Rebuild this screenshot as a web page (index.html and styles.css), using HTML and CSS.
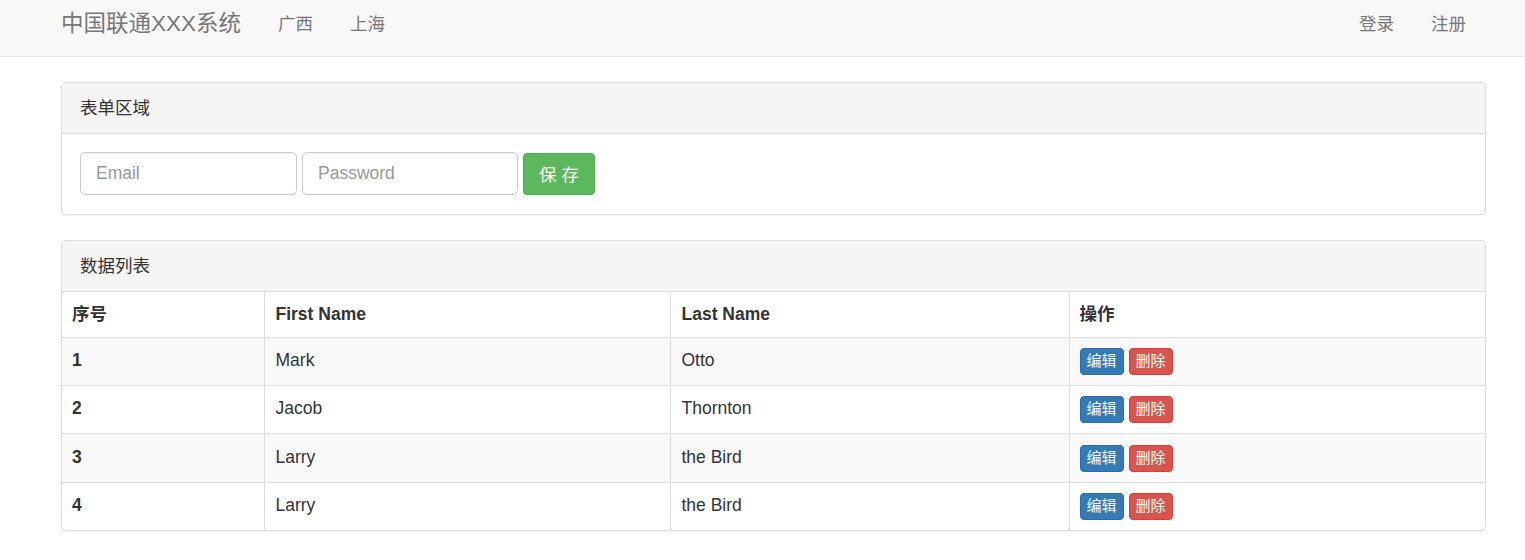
FILE: index.html
```html
<!DOCTYPE html>
<html lang="zh-CN">
<head>
<meta charset="utf-8">
<title>中国联通XXX系统</title>
<link rel="stylesheet" href="styles.css">
</head>
<body>
<nav class="navbar">
  <div class="nav-inner">
    <div class="nav-left">
      <a class="brand" href="#">中国联通XXX系统</a>
      <a class="nav-link" href="#">广西</a>
      <a class="nav-link" href="#">上海</a>
    </div>
    <div class="nav-right">
      <a class="nav-link" href="#">登录</a>
      <a class="nav-link" href="#">注册</a>
    </div>
  </div>
</nav>
<main class="container">
  <section class="panel">
    <div class="panel-heading">表单区域</div>
    <div class="panel-body">
      <form class="form-inline">
        <input class="form-control" type="email" placeholder="Email">
        <input class="form-control pw" type="password" placeholder="Password">
        <button class="btn btn-success" type="button">保 存</button>
      </form>
    </div>
  </section>
  <section class="panel">
    <div class="panel-heading">数据列表</div>
    <table class="table">
      <colgroup>
        <col class="c1"><col class="c2"><col class="c3"><col class="c4">
      </colgroup>
      <thead>
        <tr><th>序号</th><th>First Name</th><th>Last Name</th><th>操作</th></tr>
      </thead>
      <tbody>
        <tr class="odd"><th>1</th><td>Mark</td><td>Otto</td><td><button class="xs edit">编辑</button><button class="xs del">删除</button></td></tr>
        <tr><th>2</th><td>Jacob</td><td>Thornton</td><td><button class="xs edit">编辑</button><button class="xs del">删除</button></td></tr>
        <tr class="odd tall"><th>3</th><td>Larry</td><td>the Bird</td><td><button class="xs edit">编辑</button><button class="xs del">删除</button></td></tr>
        <tr><th>4</th><td>Larry</td><td>the Bird</td><td><button class="xs edit">编辑</button><button class="xs del">删除</button></td></tr>
      </tbody>
    </table>
  </section>
</main>
</body>
</html>
```

FILE: styles.css
```css
* { box-sizing: border-box; }
html, body { margin: 0; padding: 0; }
body {
  font-family: "Liberation Sans", "Noto Sans CJK SC", sans-serif;
  font-size: 17.5px;
  line-height: 25px;
  color: #333;
  background: #fff;
}
a { text-decoration: none; }

.navbar {
  height: 57px;
  background: #f8f8f8;
  border-bottom: 1px solid #e7e7e7;
  margin-bottom: 25px;
}
.nav-inner {
  height: 56px;
  margin-left: 61px;
  width: 1425px;
  display: flex;
  justify-content: space-between;
  align-items: center;
  padding-bottom: 8px;
}
.nav-left, .nav-right { display: flex; align-items: center; }
.brand {
  font-size: 22.5px;
  color: #777;
  padding-right: 18.5px;
  line-height: 30px;
}
.nav-link {
  font-size: 17.5px;
  color: #777;
  padding: 0 18.5px;
  line-height: 25px;
}
.nav-right .nav-link:last-child { padding-right: 20px; }

.container {
  margin-left: 61px;
  width: 1425px;
}
.panel {
  border: 1px solid #ddd;
  border-radius: 5px;
  background: #fff;
  box-shadow: 0 1px 1px rgba(0,0,0,.05);
  margin-bottom: 25px;
  overflow: hidden;
}
.panel-heading {
  background: #f5f5f5;
  border-bottom: 1px solid #ddd;
  padding: 12.5px 18px;
  height: 51px;
  line-height: 25px;
  color: #333;
}
.panel-body {
  padding: 18px 18px 19px;
}
.form-inline { display: flex; gap: 5px; align-items: center; }
.form-control {
  width: 217px;
  height: 43px;
  padding: 7.5px 15px;
  font-family: inherit;
  font-size: 17.5px;
  color: #555;
  border: 1px solid #ccc;
  border-radius: 5px;
  box-shadow: inset 0 1px 1px rgba(0,0,0,.075);
  background: #fff;
  outline: none;
}
.form-control.pw { width: 216px; }
.form-control::placeholder { color: #999; }
.btn {
  height: 42px;
  padding: 0 15px;
  font-family: inherit;
  font-size: 17.5px;
  border-radius: 4px;
  border: 1px solid transparent;
  cursor: pointer;
}
.btn-success {
  color: #fff;
  background: #5cb85c;
  border-color: #4cae4c;
  width: 72px;
}

.table {
  width: 100%;
  border-collapse: collapse;
  table-layout: fixed;
}
.c1 { width: 202px; }
.c2 { width: 406px; }
.c3 { width: 399px; }
.c4 { width: 416px; }
.table th, .table td {
  text-align: left;
  vertical-align: top;
  padding: 10px 10px 10px 11px;
  line-height: 25px;
  border: 1px solid #ddd;
}
.table thead th { padding-top: 10px; padding-bottom: 9px; height: 45px; }
.table tr > :first-child { border-left: 0; padding-left: 10px; }
.table tr > :last-child { border-right: 0; padding-left: 10px; }
.table thead tr th { border-top: 0; }
.table tbody tr:last-child > * { border-bottom: 0; }
.table tbody th { font-weight: bold; }
.table tbody td, .table tbody th { height: 48px; padding-top: 10px; padding-bottom: 10px; }
.table tbody tr.tall > * { height: 49px; padding-top: 11px; }
.table tr.odd { background: #f9f9f9; }

.xs {
  font-family: inherit;
  font-size: 15px;
  line-height: 22px;
  height: 27px;
  padding: 1px 6px;
  border-radius: 4px;
  border: 1px solid transparent;
  color: #fff;
  cursor: pointer;
  vertical-align: top;
  margin: 0;
}
.xs + .xs { margin-left: 5px; }
.edit { background: #337ab7; border-color: #2e6da4; }
.del { background: #d9534f; border-color: #d43f3a; }
```
